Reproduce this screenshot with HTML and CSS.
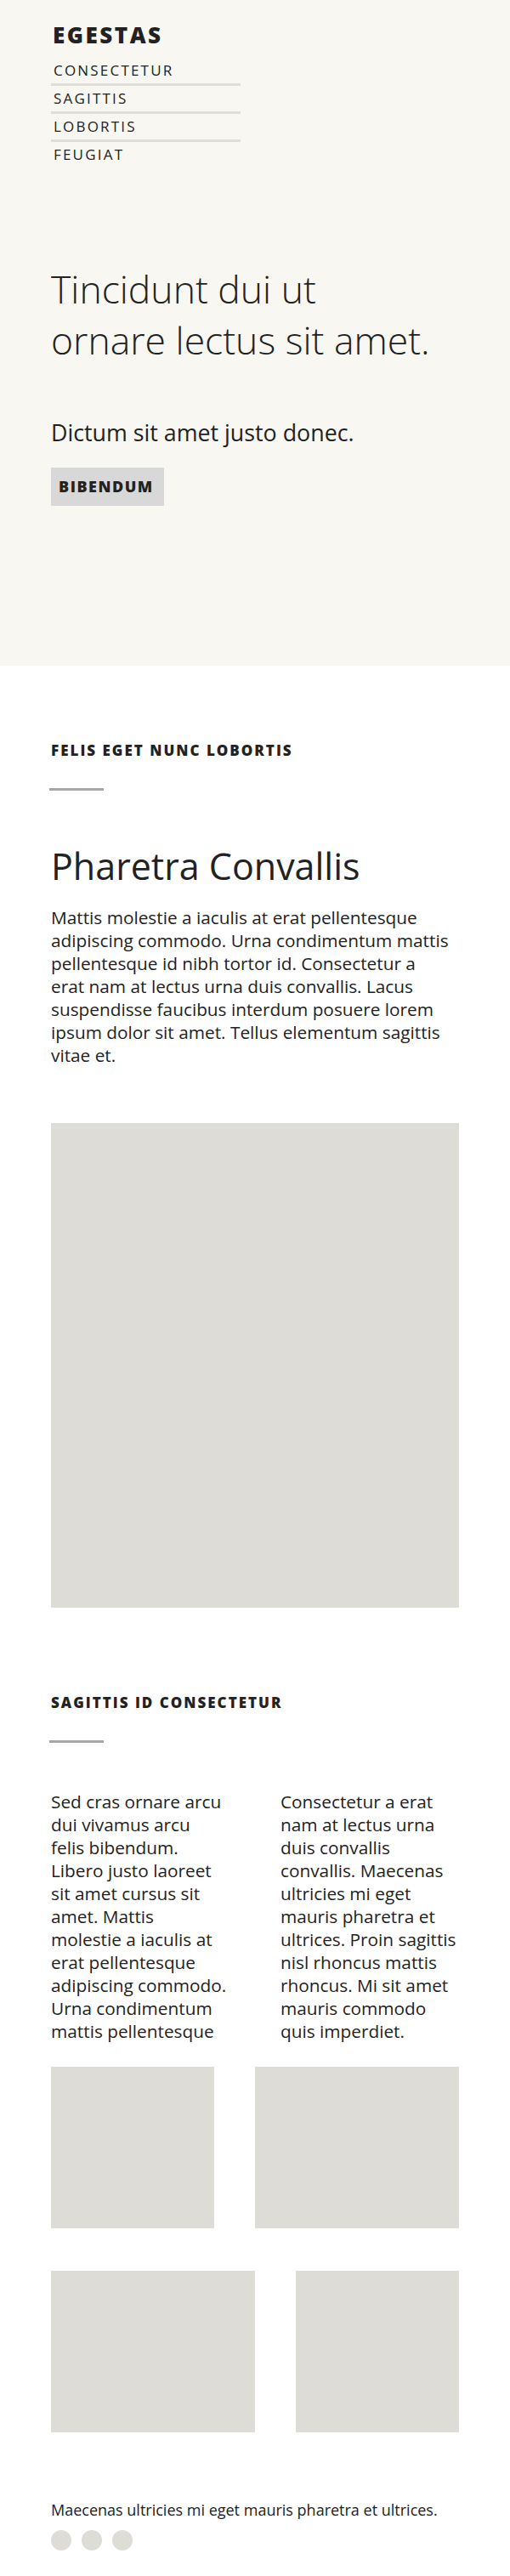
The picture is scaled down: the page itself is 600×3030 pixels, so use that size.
FILE: index.html
```html
<!DOCTYPE html>
<html lang="la">
<head>
<meta charset="utf-8">
<title>Egestas</title>
<link rel="stylesheet" href="styles.css">
</head>
<body>
<header class="hero">
  <div class="brand">EGESTAS</div>
  <ul class="nav">
    <li>CONSECTETUR</li>
    <li>SAGITTIS</li>
    <li>LOBORTIS</li>
    <li>FEUGIAT</li>
  </ul>
  <h1 class="hero-title">Tincidunt dui ut<br>ornare lectus sit amet.</h1>
  <p class="hero-sub">Dictum sit amet justo donec.</p>
  <span class="button">BIBENDUM</span>
</header>

<main>
  <section class="section first">
    <h3 class="label">FELIS EGET NUNC LOBORTIS</h3>
    <div class="divider"></div>
    <h2 class="heading">Pharetra Convallis</h2>
    <p class="text intro">Mattis molestie a iaculis at erat pellentesque adipiscing commodo. Urna condimentum mattis pellentesque id nibh tortor id. Consectetur a erat nam at lectus urna duis convallis. Lacus suspendisse faucibus interdum posuere lorem ipsum dolor sit amet. Tellus elementum sagittis vitae et.</p>
    <div class="image-large"></div>
  </section>

  <section class="section second">
    <h3 class="label">SAGITTIS ID CONSECTETUR</h3>
    <div class="divider"></div>
    <div class="columns">
      <p class="text">Sed cras ornare arcu dui vivamus arcu felis bibendum. Libero justo laoreet sit amet cursus sit amet. Mattis molestie a iaculis at erat pellentesque adipiscing commodo. Urna condimentum mattis pellentesque</p>
      <p class="text">Consectetur a erat nam at lectus urna duis convallis convallis. Maecenas ultricies mi eget mauris pharetra et ultrices. Proin sagittis nisl rhoncus mattis rhoncus. Mi sit amet mauris commodo quis imperdiet.</p>
    </div>
    <div class="gallery">
      <div class="tile"></div>
      <div class="tile"></div>
      <div class="tile"></div>
      <div class="tile"></div>
    </div>
  </section>
</main>

<footer class="footer">
  <p class="footer-text">Maecenas ultricies mi eget mauris pharetra et ultrices.</p>
  <div class="dots">
    <span class="dot"></span>
    <span class="dot"></span>
    <span class="dot"></span>
  </div>
</footer>
</body>
</html>
```

FILE: styles.css
```css
* { box-sizing: border-box; }

body {
  margin: 0;
  font-family: "Open Sans", "Noto Sans", sans-serif;
  color: #222222;
  background: #ffffff;
}

.hero {
  background: #f8f7f1;
  padding: 25px 60px 188px;
}

.brand {
  font-size: 26px;
  font-weight: 800;
  letter-spacing: 2.5px;
  line-height: 32px;
  padding-left: 2px;
}

.nav {
  list-style: none;
  margin: 11px 0 0;
  padding: 0;
  width: 223px;
}

.nav li {
  font-size: 17px;
  line-height: 30px;
  letter-spacing: 2.2px;
  padding-left: 3px;
  border-bottom: 3px solid #dfded8;
}

.nav li:last-child { border-bottom: none; }

.hero-title {
  margin: 113px 0 0;
  font-size: 44.5px;
  font-weight: 300;
  line-height: 60px;
}

.hero-sub {
  margin: 61px 0 0;
  font-size: 26.8px;
  line-height: 36px;
}

.button {
  display: inline-block;
  margin-top: 23px;
  background: #d8d8d8;
  padding: 0 12px 0 9px;
  height: 45px;
  line-height: 45px;
  font-size: 18px;
  font-weight: 800;
  letter-spacing: 1.5px;
}

.section { padding: 0 60px; }
.section.first { padding-top: 88px; }
.section.second { padding-top: 100px; }

.label {
  margin: 0;
  font-size: 17px;
  font-weight: 800;
  letter-spacing: 2px;
  line-height: 24px;
}

.divider {
  margin: 32px 0 0 -2px;
  width: 64px;
  height: 3px;
  background: #a6a6a6;
}

.heading {
  margin: 64px 0 0;
  font-size: 43px;
  font-weight: 400;
  line-height: 50px;
}

.text {
  margin: 0;
  font-size: 20.8px;
  line-height: 27px;
}

.text.intro {
  margin-top: 22px;
  max-width: 470.5px;
}

.image-large {
  margin-top: 66px;
  height: 570px;
  background: #dddcd7;
}

.columns {
  margin-top: 56px;
  display: grid;
  grid-template-columns: 207.5px 210px;
  column-gap: 62.5px;
}

.gallery {
  margin-top: 28px;
  display: grid;
  grid-template-columns: repeat(10, 1fr);
  row-gap: 50px;
}

.tile {
  height: 190px;
  background: #dddcd7;
}

.gallery .tile:nth-child(1) { grid-column: 1 / span 4; }
.gallery .tile:nth-child(2) { grid-column: 6 / span 5; }
.gallery .tile:nth-child(3) { grid-column: 1 / span 5; }
.gallery .tile:nth-child(4) { grid-column: 7 / span 4; }

.footer {
  padding: 78px 60px 30px;
}

.footer-text {
  margin: 0;
  font-size: 18px;
  line-height: 27px;
}

.dots {
  margin-top: 10px;
  display: flex;
  gap: 12px;
}

.dot {
  width: 24px;
  height: 24px;
  border-radius: 50%;
  background: #dddcd7;
}
```
